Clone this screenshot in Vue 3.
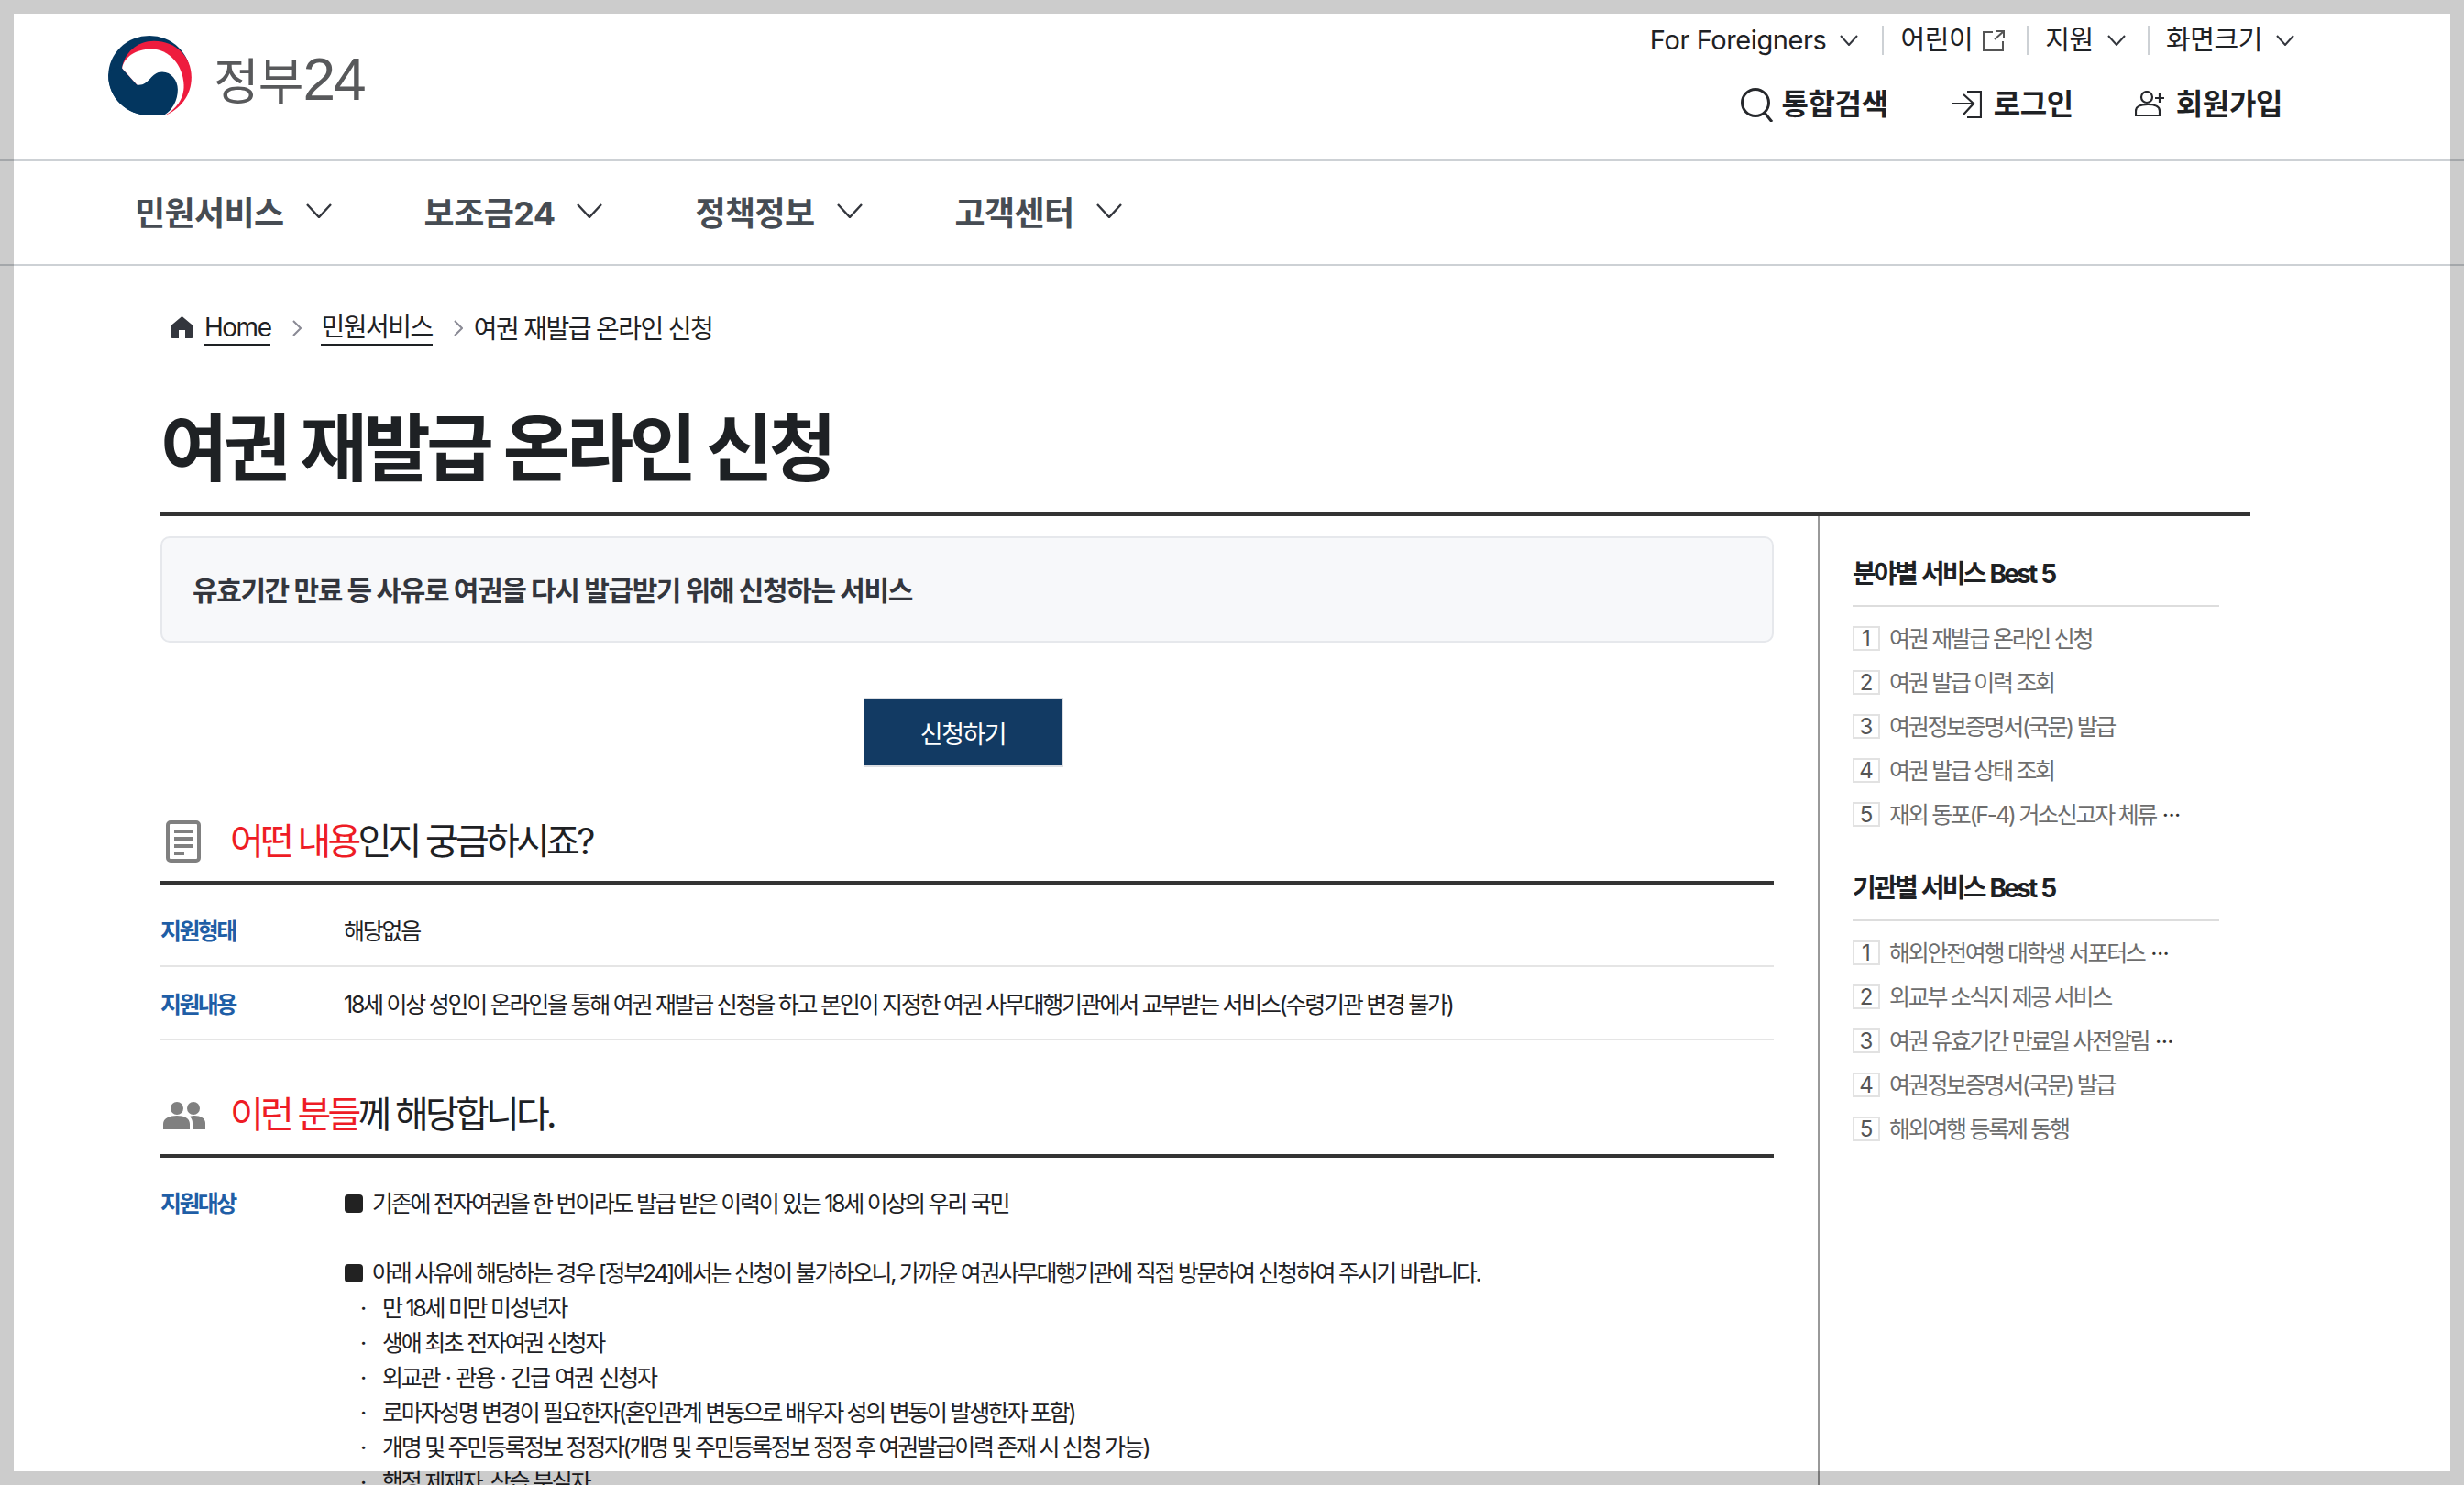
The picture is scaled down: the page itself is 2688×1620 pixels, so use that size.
<script setup>
const toItems = (list) => list.map((t) => ({ text: t.replace(' ···', ' '), more: t.endsWith('···') }))
const sideGroups = [
  { title: '분야별 서비스 Best 5', items: toItems(['여권 재발급 온라인 신청', '여권 발급 이력 조회', '여권정보증명서(국문) 발급', '여권 발급 상태 조회', '재외 동포(F-4) 거소신고자 체류 ···']) },
  { title: '기관별 서비스 Best 5', items: toItems(['해외안전여행 대학생 서포터스 ···', '외교부 소식지 제공 서비스', '여권 유효기간 만료일 사전알림 ···', '여권정보증명서(국문) 발급', '해외여행 등록제 동행']) },
]
const nav = ['민원서비스', '보조금24', '정책정보', '고객센터']
const subs = [
  '만 18세 미만 미성년자',
  '생애 최초 전자여권 신청자',
  '외교관 · 관용 · 긴급 여권 신청자',
  '로마자성명 변경이 필요한자(혼인관계 변동으로 배우자 성의 변동이 발생한자 포함)',
  '개명 및 주민등록정보 정정자(개명 및 주민등록정보 정정 후 여권발급이력 존재 시 신청 가능)',
  '행정 제재자, 상습 분실자',
]
</script>

<template>
  <div class="page">
    <header class="header">
      <div class="logo">
        <svg class="mark" viewBox="55 28 273 262" width="91" height="87">
          <ellipse cx="190" cy="159" rx="135" ry="131" fill="#03365f" />
          <path d="M100 135C105 85 150 45 205 45C275 45 328 95 328 165C328 225 290 270 240 290Z" fill="#ee1c3e" />
          <path d="M100 135C105 100 145 72 195 72C255 72 300 125 303 190C305 235 275 272 240 290Z" fill="#fff" />
          <path d="M100 135C100 170 130 190 155 190C190 190 195 147 232 147C262 147 283 175 283 205C283 240 265 272 240 288C225 290 205 290 190 290C115 290 55 232 55 160C55 145 70 125 100 135Z" fill="#03365f" />
        </svg>
        <span class="logo-text">정부<b>24</b></span>
      </div>
      <div class="header-right">
        <div class="util">
          <a class="u">For Foreigners<svg class="chev-s" viewBox="0 0 20 12"><path d="M1 1l9 10 9-10" /></svg></a>
          <a class="u sep kid">어린이<svg class="ext" viewBox="0 0 24 23"><path d="M11 2H1v20h21V12M13 10L23 1M15 1h8v8" /></svg></a>
          <a class="u sep">지원<svg class="chev-s" viewBox="0 0 20 12"><path d="M1 1l9 10 9-10" /></svg></a>
          <a class="u sep">화면크기<svg class="chev-s" viewBox="0 0 20 12"><path d="M1 1l9 10 9-10" /></svg></a>
        </div>
        <div class="acts">
          <a class="act a1">
            <svg width="36" height="37" viewBox="0 0 36 37" class="ic"><circle cx="16" cy="16" r="14.5" /><path d="M26 27l8 10" /></svg>
            통합검색
          </a>
          <a class="act a2">
            <svg width="32" height="30" viewBox="0 0 32 30" class="ic thin"><path d="M0 14h23M12 4l11 10-11 12M16 1h15v28H16" /></svg>
            로그인
          </a>
          <a class="act a3">
            <svg width="34" height="30" viewBox="0 0 34 30" class="ic thin"><circle cx="13" cy="7" r="6" /><path d="M1 27H27V22C27 17 22 15 14 15C6 15 1 17 1 22ZM27 3V13M22 8H32" /></svg>
            회원가입
          </a>
        </div>
      </div>
    </header>

    <nav class="gnb">
      <a v-for="n in nav" :key="n" class="gnb-item">{{ n }}<svg class="chev" viewBox="0 0 28 16"><path d="M1 1l13 14L27 1" /></svg></a>
    </nav>

    <div class="wrap">
      <div class="crumbs">
        <svg class="home" viewBox="0 0 25 24"><path d="M12.5 0L25 10.5V22a2 2 0 0 1-2 2H16V15H9v9H2a2 2 0 0 1-2-2V10.5Z" /></svg>
        <a class="link">Home</a>
        <svg class="cr" viewBox="0 0 10 18"><path d="M1 1l8 8-8 8" /></svg>
        <a class="link">민원서비스</a>
        <svg class="cr last" viewBox="0 0 10 18"><path d="M1 1l8 8-8 8" /></svg>
        <span class="cur">여권 재발급 온라인 신청</span>
      </div>

      <h1 class="title">여권 재발급 온라인 신청</h1>

      <div class="cols">
        <main class="main">
          <div class="summary">유효기간 만료 등 사유로 여권을 다시 발급받기 위해 신청하는 서비스</div>
          <div class="btn-row"><button class="apply">신청하기</button></div>

          <h2 class="sec">
            <span class="sec-ic">
              <svg width="38" height="46" viewBox="0 0 38 46" class="doc"><rect x="2" y="2" width="34" height="42" rx="3" /><path d="M9 12h20M9 20h20M9 28h20M9 36h11" /></svg>
            </span>
            <span><em>어떤 내용</em>인지 궁금하시죠?</span>
          </h2>
          <div class="row row1"><div class="k">지원형태</div><div class="v">해당없음</div></div>
          <div class="row"><div class="k">지원내용</div><div class="v">18세 이상 성인이 온라인을 통해 여권 재발급 신청을 하고 본인이 지정한 여권 사무대행기관에서 교부받는 서비스(수령기관 변경 불가)</div></div>

          <h2 class="sec sec2">
            <span class="sec-ic">
              <svg class="ppl" width="46" height="30" viewBox="0 0 46 30" fill="#808080"><circle cx="15" cy="7" r="7" /><circle cx="33" cy="7" r="7" /><path d="M0 30v-6c0-6 7-9 15-9s14 3 14 9v6ZM32 30v-7c0-3-1-5-3-7 2-1 4-1 5-1 7 0 12 3 12 8v7Z" /></svg>
            </span>
            <span><em>이런 분들</em>께 해당합니다.</span>
          </h2>
          <div class="target">
            <div class="k">지원대상</div>
            <div class="tv">
              <p class="bul first"><i></i>기존에 전자여권을 한 번이라도 발급 받은 이력이 있는 18세 이상의 우리 국민</p>
              <p class="bul second"><i></i>아래 사유에 해당하는 경우 [정부24]에서는 신청이 불가하오니, 가까운 여권사무대행기관에 직접 방문하여 신청하여 주시기 바랍니다.</p>
              <p v-for="s in subs" :key="s" class="sub"><u>·</u>{{ s }}</p>
            </div>
          </div>
        </main>

        <aside class="side">
          <section v-for="g in sideGroups" :key="g.title" class="side-g">
            <h3 class="side-t">{{ g.title }}</h3>
            <ul class="side-l">
              <li v-for="(it, i) in g.items" :key="it.text"><span class="num">{{ i + 1 }}</span><span class="st">{{ it.text }}<b v-if="it.more" class="more">···</b></span></li>
            </ul>
          </section>
        </aside>
      </div>
    </div>
    <div class="frame"></div>
  </div>
</template>

<style>
html, body { margin: 0; overflow: hidden; background: #fff; }
</style>

<style scoped>
.page {
  position: relative;
  width: 2688px;
  height: 1620px;
  overflow: hidden;
  background: #fff;
  color: #1e2124;
  font-family: Inter, "Noto Sans CJK KR", sans-serif;
}
.frame {
  position: absolute;
  inset: 0;
  box-sizing: border-box;
  border: 15px solid rgba(0, 0, 0, 0.2);
  pointer-events: none;
}
svg { display: block; flex: none; }

.header {
  box-sizing: border-box;
  height: 176px;
  border-bottom: 2px solid #cdd1d5;
  display: flex;
  justify-content: space-between;
}
.logo { display: flex; align-items: flex-start; padding: 39px 0 0 118px; }
.logo-text {
  margin: 15px 0 0 24px;
  font-size: 54px;
  line-height: 66px;
  color: #58595b;
  letter-spacing: -1px;
  font-weight: 400;
}
.logo-text b {
  font-family: "Liberation Sans", sans-serif;
  font-weight: 400;
  font-size: 64px;
  letter-spacing: -2px;
}
.header-right { display: flex; flex-direction: column; align-items: flex-end; }
.util {
  display: flex;
  align-items: center;
  height: 32px;
  margin-top: 28px;
  padding-right: 185px;
  font-size: 29px;
  letter-spacing: -0.4px;
  color: #1e2124;
}
.u { display: flex; align-items: center; line-height: 32px; white-space: nowrap; }
.u.sep { border-left: 2px solid #cdd1d5; margin-left: 24px; padding-left: 18px; }
.u.sep.kid { margin-left: 26px; }
.chev-s { width: 20px; height: 12px; margin-left: 15px; fill: none; stroke: #33363d; stroke-width: 2; }
.ext { width: 24px; height: 23px; margin-left: 11px; fill: none; stroke: #555; stroke-width: 2; }
.acts { display: flex; align-items: center; margin-top: 34px; padding-right: 198px; }
.act { display: flex; align-items: center; font-size: 32px; font-weight: 700; letter-spacing: -0.4px; line-height: 40px; white-space: nowrap; color: #1e2124; }
.a1 svg { margin-right: 9px; }
.a2 { margin-left: 70px; }
.a2 svg { margin-right: 13px; }
.a3 { margin-left: 67px; }
.a3 svg { margin-right: 11px; }
.ic { fill: none; stroke: #26282c; stroke-width: 3; }
.ic.thin { stroke-width: 2.2; }

.gnb {
  box-sizing: border-box;
  height: 114px;
  padding: 0 0 4px 147px;
  border-bottom: 2px solid #cdd1d5;
  display: flex;
  align-items: center;
}
.gnb-item {
  display: flex;
  align-items: center;
  font-size: 36px;
  font-weight: 700;
  color: #464c53;
  letter-spacing: -0.6px;
  margin-right: 101px;
  white-space: nowrap;
}
.chev { width: 28px; height: 16px; margin-left: 24px; fill: none; stroke: #33363d; stroke-width: 2.4; }

.wrap { padding-left: 175px; width: 2280px; }
.crumbs { display: flex; align-items: center; height: 44px; margin-top: 45px; padding-left: 11px; font-size: 28px; letter-spacing: -1.5px; }
.home { width: 25px; height: 24px; margin-right: 12px; fill: #33363d; }
.link { color: #1e2124; border-bottom: 2px solid #1e2124; line-height: 36px; margin-top: 2px; }
.cr { width: 10px; height: 18px; margin: 2px 21px 0 24px; fill: none; stroke: #8a8a95; stroke-width: 2; }
.cr.last { margin-right: 12px; margin-left: 23px; }
.cur { color: #1e2124; letter-spacing: -1.6px; }
.title {
  margin: 56px 0 0;
  height: 124px;
  font-size: 80px;
  line-height: 108px;
  font-weight: 700;
  letter-spacing: -4.6px;
  color: #1e2124;
}
.cols { display: grid; grid-template-columns: 1760px 1fr; border-top: 4px solid #333; }
.main { min-width: 0; }
.summary {
  box-sizing: border-box;
  height: 116px;
  margin-top: 22px;
  padding: 0 0 2px 33px;
  display: flex;
  align-items: center;
  background: #f7f8fa;
  border: 2px solid #e6e8ec;
  border-radius: 10px;
  font-size: 30px;
  font-weight: 700;
  letter-spacing: -1.4px;
  color: #33363d;
}
.btn-row { display: flex; justify-content: center; margin-top: 60px; padding-right: 9px; }
.apply {
  box-sizing: border-box;
  width: 218px;
  height: 76px;
  background: #123a63;
  color: #fff;
  border: 2px solid #dcdee2;
  border-width: 2px 1px;
  font: 400 27px Inter, "Noto Sans CJK KR", sans-serif;
  letter-spacing: -1.5px;
}
.sec {
  box-sizing: border-box;
  display: flex;
  align-items: center;
  height: 94px;
  margin: 34px 0 0;
  padding-top: 3px;
  border-bottom: 4px solid #333;
  font-size: 40px;
  line-height: 48px;
  font-weight: 400;
  letter-spacing: -3.8px;
  color: #1e2124;
}
.sec em { font-style: normal; color: #ee1c25; }
.sec-ic { width: 76px; display: flex; padding-left: 6px; box-sizing: border-box; }
.sec2 .sec-ic { padding-left: 3px; }
.ppl { margin-top: 3px; }
.doc { fill: none; stroke: #808080; stroke-width: 4; }
.row {
  box-sizing: border-box;
  display: flex;
  align-items: center;
  height: 80px;
  border-bottom: 2px solid #e5e5e5;
  font-size: 25px;
  letter-spacing: -2.27px;
  color: #1e2124;
}
.row1 { height: 90px; padding-top: 10px; }
.k { flex: none; width: 200px; font-weight: 700; color: #1f5ea6; letter-spacing: -2.6px; font-size: 25px; }
.v { flex: 1; }
.target { display: flex; padding-top: 31px; font-size: 25px; letter-spacing: -2.3px; line-height: 38px; }
.tv { flex: 1; }
.tv p { margin: 0; white-space: nowrap; }
.bul { display: flex; align-items: center; }
.bul i { flex: none; width: 20px; height: 20px; border-radius: 4px; background: #222; margin: 0 10px 0 1px; }
.second { margin-top: 38px !important; }
.sub { display: flex; padding-left: 18px; }
.sub:nth-child(5) { word-spacing: 2px; }
.sub u { text-decoration: none; width: 24px; flex: none; }

.side { border-left: 2px solid #999; margin-left: 48px; padding: 45px 34px 0 36px; height: 1200px; box-sizing: border-box; }
.side-g + .side-g { margin-top: 40px; }
.side-t {
  margin: 0;
  box-sizing: border-box;
  font-size: 28px;
  line-height: 36px;
  font-weight: 700;
  letter-spacing: -2.8px;
  word-spacing: 2px;
  color: #1e2124;
  height: 54px;
  border-bottom: 2px solid #ddd;
}
.side-l { list-style: none; margin: 9px 0 0; padding: 0; }
.side-l li { display: flex; align-items: center; height: 48px; font-size: 25px; letter-spacing: -2.3px; color: #6d6d6d; white-space: nowrap; }
.more { font-weight: 400; color: #333; letter-spacing: -0.6px; margin-left: 2px; }
.num {
  box-sizing: border-box;
  width: 30px;
  height: 27px;
  margin: 3px 10px 0 0;
  border: 2px solid #e2e2e2;
  display: flex;
  align-items: center;
  justify-content: center;
  font-size: 24px;
  letter-spacing: 0;
  color: #555;
}
</style>
